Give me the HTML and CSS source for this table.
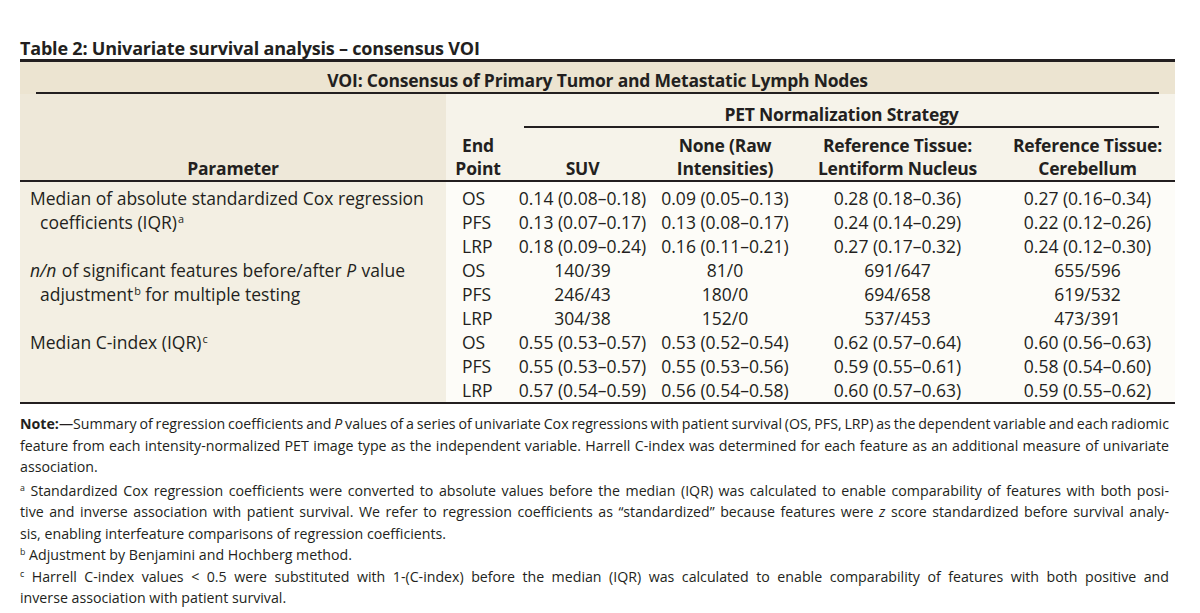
FILE: index.html
```html
<!DOCTYPE html>
<html lang="en">
<head>
<meta charset="utf-8">
<title>Table 2: Univariate survival analysis – consensus VOI</title>
<link rel="stylesheet" href="styles.css">
</head>
<body>
<div class="page">
  <h1 class="title">Table 2: Univariate survival analysis – consensus VOI</h1>
  <table class="tbl">
    <colgroup>
      <col class="c-param">
      <col class="c-ep">
      <col class="c-suv">
      <col class="c-none">
      <col class="c-lent">
      <col class="c-cereb">
    </colgroup>
    <thead>
      <tr class="voi">
        <th colspan="6"><div class="voi-inner">VOI: Consensus of Primary Tumor and Metastatic Lymph Nodes</div></th>
      </tr>
      <tr class="pet">
        <th rowspan="2" class="param-h">Parameter</th>
        <th rowspan="2" class="ep-h">End<br>Point</th>
        <th colspan="4" class="pet-h"><div class="pet-inner">PET Normalization Strategy</div></th>
      </tr>
      <tr class="cols">
        <th>SUV</th>
        <th>None (Raw<br>Intensities)</th>
        <th>Reference Tissue:<br>Lentiform Nucleus</th>
        <th>Reference Tissue:<br>Cerebellum</th>
      </tr>
    </thead>
    <tbody>
      <tr class="first">
        <td rowspan="3" class="param"><div class="hang">Median of absolute standardized Cox regression coefficients (IQR)<sup>a</sup></div></td>
        <td class="ep">OS</td><td>0.14 (0.08–0.18)</td><td>0.09 (0.05–0.13)</td><td>0.28 (0.18–0.36)</td><td>0.27 (0.16–0.34)</td>
      </tr>
      <tr><td class="ep">PFS</td><td>0.13 (0.07–0.17)</td><td>0.13 (0.08–0.17)</td><td>0.24 (0.14–0.29)</td><td>0.22 (0.12–0.26)</td></tr>
      <tr><td class="ep">LRP</td><td>0.18 (0.09–0.24)</td><td>0.16 (0.11–0.21)</td><td>0.27 (0.17–0.32)</td><td>0.24 (0.12–0.30)</td></tr>
      <tr>
        <td rowspan="3" class="param"><div class="hang"><i>n/n</i> of significant features before/after <i>P</i> value adjustment<sup>b</sup> for multiple testing</div></td>
        <td class="ep">OS</td><td>140/39</td><td>81/0</td><td>691/647</td><td>655/596</td>
      </tr>
      <tr><td class="ep">PFS</td><td>246/43</td><td>180/0</td><td>694/658</td><td>619/532</td></tr>
      <tr><td class="ep">LRP</td><td>304/38</td><td>152/0</td><td>537/453</td><td>473/391</td></tr>
      <tr>
        <td rowspan="3" class="param"><div class="hang">Median C-index (IQR)<sup>c</sup></div></td>
        <td class="ep">OS</td><td>0.55 (0.53–0.57)</td><td>0.53 (0.52–0.54)</td><td>0.62 (0.57–0.64)</td><td>0.60 (0.56–0.63)</td>
      </tr>
      <tr><td class="ep">PFS</td><td>0.55 (0.53–0.57)</td><td>0.55 (0.53–0.56)</td><td>0.59 (0.55–0.61)</td><td>0.58 (0.54–0.60)</td></tr>
      <tr><td class="ep">LRP</td><td>0.57 (0.54–0.59)</td><td>0.56 (0.54–0.58)</td><td>0.60 (0.57–0.63)</td><td>0.59 (0.55–0.62)</td></tr>
    </tbody>
  </table>
  <div class="notes">
    <p class="note">
      <span class="ln j"><b>Note:</b>—Summary of regression coefficients and <i>P</i> values of a series of univariate Cox regressions with patient survival (OS, PFS, LRP) as the dependent variable and each radiomic</span>
      <span class="ln j">feature from each intensity-normalized PET image type as the independent variable. Harrell C-index was determined for each feature as an additional measure of univariate</span>
      <span class="ln">association.</span>
    </p>
    <p class="note fn">
      <span class="ln j"><sup>a</sup> Standardized Cox regression coefficients were converted to absolute values before the median (IQR) was calculated to enable comparability of features with both posi-</span>
      <span class="ln j">tive and inverse association with patient survival. We refer to regression coefficients as “standardized” because features were <i>z</i> score standardized before survival analy-</span>
      <span class="ln">sis, enabling interfeature comparisons of regression coefficients.</span>
    </p>
    <p class="note">
      <span class="ln"><sup>b</sup> Adjustment by Benjamini and Hochberg method.</span>
    </p>
    <p class="note">
      <span class="ln j"><sup>c</sup> Harrell C-index values &lt; 0.5 were substituted with 1-(C-index) before the median (IQR) was calculated to enable comparability of features with both positive and</span>
      <span class="ln">inverse association with patient survival.</span>
    </p>
  </div>
</div>
</body>
</html>
```

FILE: styles.css
```css
* { box-sizing: border-box; }

html, body {
  margin: 0;
  padding: 0;
  background: #ffffff;
}

body {
  font-family: "Open Sans", Lato, sans-serif;
  color: #231f20;
}

.page {
  padding: 38px 25px 0 20px;
}

.title {
  margin: 0 0 1px 0;
  font-size: 18px;
  line-height: 20px;
  font-weight: 700;
  letter-spacing: -0.2px;
}

.tbl {
  width: 100%;
  border-collapse: collapse;
  table-layout: fixed;
  border-top: 3px solid #231f20;
  border-bottom: 2px solid #231f20;
  font-size: 17.5px;
}

.c-param { width: 426px; }
.c-ep { width: 64px; }
.c-suv { width: 145px; }
.c-none { width: 140px; }
.c-lent { width: 205px; }
.c-cereb { width: 175px; }

.tbl th {
  font-weight: 700;
  padding: 0;
  line-height: 23px;
  text-align: center;
  vertical-align: bottom;
  background: #f6f3ea;
  letter-spacing: -0.2px;
}

.tbl .voi th {
  background: #ece4d1;
  padding: 6px 16px 0 16px;
}

.voi-inner {
  line-height: 24px;
  border-bottom: 2px solid #231f20;
}

.tbl .pet-h {
  padding-top: 9px;
}

.pet-inner {
  margin: 0 16px 0 14px;
  border-bottom: 2px solid #231f20;
}

.tbl th.param-h {
  background: #eee8d9;
}

.tbl .cols th {
  padding-top: 6px;
}

.tbl .cols th,
.tbl th.param-h,
.tbl th.ep-h {
  border-bottom: 2px solid #231f20;
}

.tbl td {
  padding: 0;
  line-height: 24px;
  text-align: center;
  vertical-align: top;
  background: #fdfcf8;
  white-space: nowrap;
}

.tbl td.param {
  background: #f3efe3;
  text-align: left;
  white-space: normal;
  padding-left: 10px;
}

.hang {
  padding-left: 10px;
  text-indent: -10px;
  padding-right: 4px;
}

.tbl td.ep {
  text-align: left;
  padding-left: 16px;
}

.tbl tr.first td {
  padding-top: 4px;
}

.hang i {
  padding-right: 1px;
}

sup {
  font-size: 0.62em;
  line-height: 0;
  vertical-align: 0.6em;
  margin-left: 1px;
}

.ln > sup:first-child {
  margin-left: 0;
}

.notes {
  margin-top: 9px;
  padding-right: 6px;
  font-size: 14.2px;
  line-height: 21.5px;
}

.note {
  margin: 0;
}

.note.fn {
  margin-top: 2px;
}

.ln {
  display: block;
  white-space: nowrap;
}

.ln.j {
  text-align: justify;
  text-align-last: justify;
  word-spacing: -1px;
}
```
